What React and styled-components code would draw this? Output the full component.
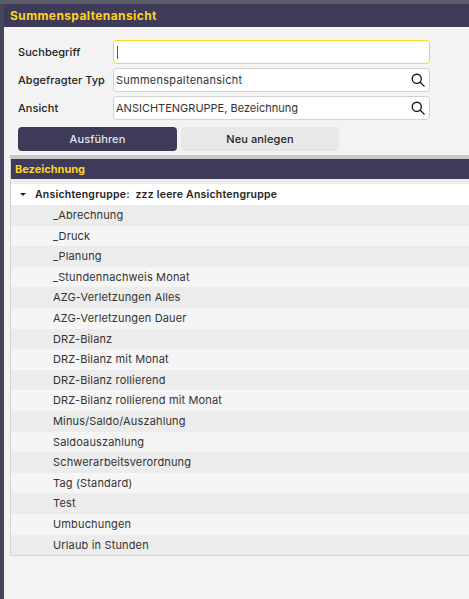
import React from 'react'
import styled, { createGlobalStyle } from 'styled-components'

const GlobalStyle = createGlobalStyle`
html, body {
    margin: 0;
    padding: 0;
    background: #4b4a60;
    overflow: hidden;
}
* {
    box-sizing: border-box;
}
`

const rows = [
    '_Abrechnung',
    '_Druck',
    '_Planung',
    '_Stundennachweis Monat',
    'AZG-Verletzungen Alles',
    'AZG-Verletzungen Dauer',
    'DRZ-Bilanz',
    'DRZ-Bilanz mit Monat',
    'DRZ-Bilanz rollierend',
    'DRZ-Bilanz rollierend mit Monat',
    'Minus/Saldo/Auszahlung',
    'Saldoauszahlung',
    'Schwerarbeitsverordnung',
    'Tag (Standard)',
    'Test',
    'Umbuchungen',
    'Urlaub in Stunden',
]

function SearchIcon() {
    return (
        <IconSvg viewBox="0 0 16 16">
            <circle cx="6.6" cy="6.6" r="5.2" />
            <path d="M10.5 10.5 L15 15" />
        </IconSvg>
    )
}

function App() {
    return (
        <Page>
            <GlobalStyle />
            <Dialog>
                <TitleBar>Summenspaltenansicht</TitleBar>
                <Body>
                    <Form>
                        <FieldRow>
                            <Label>Suchbegriff</Label>
                            <InputBox $active>
                                <Caret />
                            </InputBox>
                        </FieldRow>
                        <FieldRow>
                            <Label>Abgefragter Typ</Label>
                            <InputBox>
                                <InputText $spacing="0.25px">Summenspaltenansicht</InputText>
                                <SearchIcon />
                            </InputBox>
                        </FieldRow>
                        <FieldRow>
                            <Label>Ansicht</Label>
                            <InputBox>
                                <InputText $spacing="0">ANSICHTENGRUPPE, Bezeichnung</InputText>
                                <SearchIcon />
                            </InputBox>
                        </FieldRow>
                    </Form>
                    <Buttons>
                        <Button $primary>Ausführen</Button>
                        <Button>Neu anlegen</Button>
                    </Buttons>
                    <Table>
                        <TableHead>Bezeichnung</TableHead>
                        <GroupRow>
                            <Arrow />
                            <GroupText>Ansichtengruppe:&nbsp; zzz leere Ansichtengruppe</GroupText>
                        </GroupRow>
                        {rows.map((row, i) => (
                            <Row key={row} $odd={i % 2 === 0}>{row}</Row>
                        ))}
                    </Table>
                </Body>
            </Dialog>
        </Page>
    )
}

export default App

const Page = styled.div`
width: 469px;
height: 599px;
padding: 4px 0 0 4px;
background: linear-gradient(#5a5a68 0, #5a5a68 4px, #46455c 4px);
font-family: "Inter", "Liberation Sans", sans-serif;
overflow: hidden;
`

const Dialog = styled.div`
width: 465px;
height: 595px;
display: flex;
flex-direction: column;
background: #f3f3f3;
`

const TitleBar = styled.div`
height: 23px;
flex: none;
padding-left: 6px;
background: #3d3b58;
color: #ffd21f;
font-size: 12px;
font-weight: 700;
letter-spacing: 0.4px;
line-height: 24px;
`

const Body = styled.div`
flex: 1;
display: flex;
flex-direction: column;
padding-top: 13px;
`

const Form = styled.div`
display: flex;
flex-direction: column;
gap: 4px;
padding-left: 14px;
width: 426px;
`

const FieldRow = styled.div`
height: 24px;
display: flex;
align-items: center;
`

const Label = styled.div`
width: 95px;
flex: none;
font-size: 11px;
font-weight: 500;
letter-spacing: 0.05px;
color: #222;
`

const InputBox = styled.div`
flex: 1;
height: 24px;
display: flex;
align-items: center;
justify-content: space-between;
padding: 0 4px 0 2px;
background: #fff;
border-radius: 4px;
border: ${props => (props.$active ? '1.5px solid #ffd21f' : '1px solid #d2d2d2')};
`

const Caret = styled.span`
width: 1px;
height: 13px;
background: #555;
margin-left: 1px;
`

const InputText = styled.span`
font-size: 11px;
letter-spacing: ${props => props.$spacing};
color: #333;
white-space: nowrap;
`

const IconSvg = styled.svg`
width: 14px;
height: 14px;
fill: none;
stroke: #111;
stroke-width: 1.5;
stroke-linecap: round;
`

const Buttons = styled.div`
display: flex;
gap: 4px;
padding: 7px 0 0 14px;
`

const Button = styled.div`
width: ${props => (props.$primary ? '159px' : '158px')};
height: 24px;
display: flex;
align-items: center;
justify-content: center;
border-radius: 4px;
background: ${props => (props.$primary ? '#3d3b58' : '#e8e8e8')};
color: ${props => (props.$primary ? '#e6e6ec' : '#222')};
font-size: 11px;
font-weight: 500;
letter-spacing: 0.1px;
`

const Table = styled.div`
margin: 4px 0 0 6px;
border-top: 4px solid #c8c8c8;
border-left: 1px solid #d2d2d2;
border-bottom: 1px solid #d2d2d2;
`

const TableHead = styled.div`
height: 20px;
padding-left: 4px;
background: #3d3b58;
color: #ffd21f;
font-size: 11px;
font-weight: 700;
line-height: 20px;
`

const GroupRow = styled.div`
height: 26px;
padding: 4px 0 0 9px;
display: flex;
align-items: center;
gap: 9px;
background: linear-gradient(#ececec 0, #ececec 5px, #fff 5px);
`

const Arrow = styled.span`
width: 0;
height: 0;
border-left: 3px solid transparent;
border-right: 3px solid transparent;
border-top: 3px solid #222;
`

const GroupText = styled.span`
font-size: 10.5px;
font-weight: 600;
letter-spacing: 0.22px;
color: #222;
white-space: nowrap;
`

const Row = styled.div`
height: 20.6px;
padding-left: 42px;
background: ${props => (props.$odd ? '#ececec' : '#f5f5f5')};
color: #333;
font-size: 11px;
letter-spacing: 0.15px;
line-height: 21px;
white-space: nowrap;
`
